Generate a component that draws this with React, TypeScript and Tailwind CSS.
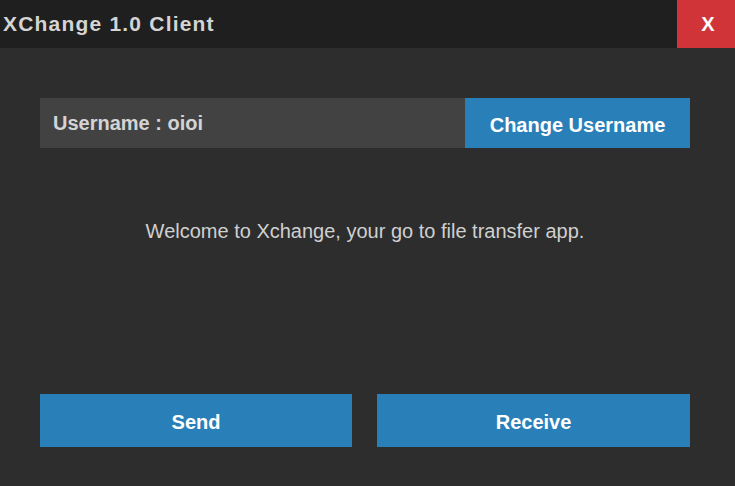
export default function App() {
    return (
        <div className="w-[735px] h-[486px] bg-[#2d2d2d] flex flex-col font-['Liberation_Sans',Arial,sans-serif] overflow-hidden">
            {/* Title bar */}
            <div className="h-[48px] bg-[#1f1f1f] flex items-center justify-between shrink-0">
                <h1 className="pl-[3px] text-[21px] font-bold tracking-[1.2px] text-[#d4d4d4]">XChange 1.0 Client</h1>
                <button className="w-[58px] h-full bg-[#d13438] text-white text-[20px] font-bold flex items-center justify-center pl-[4px]">
                    X
                </button>
            </div>

            <div className="flex-1 flex flex-col pl-[40px] pr-[45px] pt-[50px] pb-[39px]">
                {/* Username row */}
                <div className="flex h-[50px]">
                    <div className="flex-1 bg-[#424242] flex items-center pl-[13px] text-[20px] font-bold text-[#d4d4d4]">
                        Username : oioi
                    </div>
                    <button className="w-[225px] bg-[#2980b9] text-white text-[20px] font-bold pt-[4px]">
                        Change Username
                    </button>
                </div>

                <p className="mt-[68px] text-center text-[20px] text-[#d0d0d0]">
                    Welcome to Xchange, your go to file transfer app.
                </p>

                {/* Actions */}
                <div className="mt-auto grid grid-cols-[312px_1fr] gap-[25px] h-[53px]">
                    <button className="bg-[#2980b9] text-white text-[20px] font-bold pt-[2px]">Send</button>
                    <button className="bg-[#2980b9] text-white text-[20px] font-bold pt-[2px]">Receive</button>
                </div>
            </div>
        </div>
    );
}
